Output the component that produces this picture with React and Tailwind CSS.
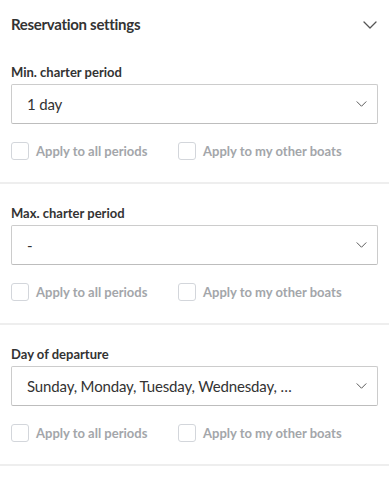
import React from "react";

const Chevron = ({ className }) => (
  <svg className={className} viewBox="0 0 14 8" fill="none">
    <path d="M1 1l6 6 6-6" stroke="#555" strokeWidth="1.3" strokeLinecap="round" strokeLinejoin="round" />
  </svg>
);

const Check = ({ label }) => (
  <label className="flex items-center gap-[7px]">
    <span className="w-[18px] h-[18px] rounded-[3px] border border-[#d3d6db] bg-white" />
    <span className="text-[13px] font-bold text-[#a3a6aa] leading-none">{label}</span>
  </label>
);

const Section = ({ label, value }) => (
  <div className="px-[11px] pt-[21px] pb-[22px] border-b-2 border-[#eeeeee]">
    <div className="text-[13px] font-bold text-[#333] leading-[16px]">{label}</div>
    <div className="mt-[4px] h-[40px] border border-[#cccccc] border-b-[#bdbdbd] rounded-[2px] flex items-center justify-between pl-[15px] pr-[10px]">
      <span className="text-[15px] tracking-[-0.15px] text-[#333]">{value}</span>
      <Chevron className="w-[11px] h-[6px]" />
    </div>
    <div className="mt-[18px] flex items-center">
      <div className="w-[167px]"><Check label="Apply to all periods" /></div>
      <Check label="Apply to my other boats" />
    </div>
  </div>
);

export default function App() {
  return (
    <div className="w-[389px] h-[480px] bg-white" style={{ fontFamily: "Lato, 'Noto Sans', sans-serif" }}>
      <div className="h-[43px] pt-[6px] px-[11px] flex items-center justify-between">
        <span className="text-[15px] font-bold tracking-[-0.3px] text-[#333]">Reservation settings</span>
        <Chevron className="w-[14px] h-[8px] mr-[1px]" />
      </div>
      <Section label="Min. charter period" value="1 day" />
      <Section label="Max. charter period" value="-" />
      <Section label="Day of departure" value="Sunday, Monday, Tuesday, Wednesday, …" />
    </div>
  );
}
